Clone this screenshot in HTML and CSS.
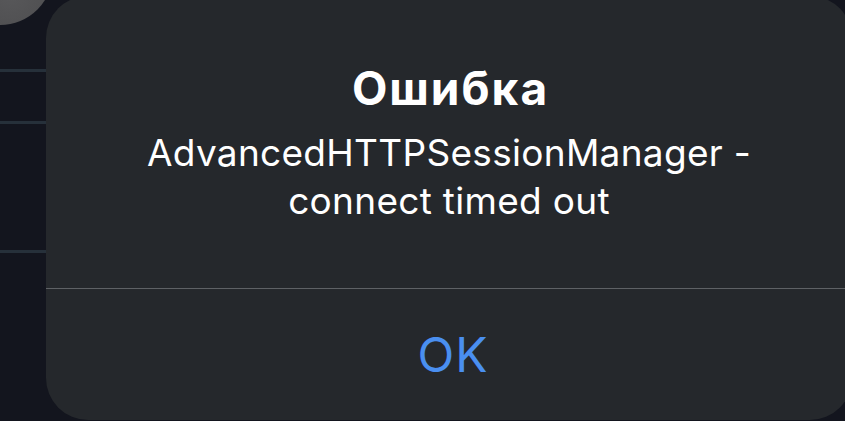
FILE: index.html
```html
<!DOCTYPE html>
<html>
<head>
    <title>Ошибка</title>
    <link rel="stylesheet" href="styles.css">
</head>
<body>
    <div class="screen">
        <!-- content behind the alert -->
        <div class="list">
            <div class="avatar"></div>
            <div class="row row-first"></div>
            <div class="row row-second"></div>
            <div class="row row-third"></div>
        </div>

        <div class="alert">
            <div class="alert-body">
                <h1 class="alert-title">Ошибка</h1>
                <p class="alert-message">AdvancedHTTPSessionManager -<br>connect timed out</p>
            </div>
            <div class="alert-actions">
                <button type="button" class="alert-button">OK</button>
            </div>
        </div>
    </div>
</body>
</html>
```

FILE: styles.css
```css
body {
    margin: 0;
    background-color: #13151e;
    font-family: Inter, "Noto Sans", sans-serif;
    overflow: hidden;
}

.screen {
    position: relative;
    width: 845px;
    height: 421px;
    overflow: hidden;
}

.list {
    width: 60px;
}

.avatar {
    position: absolute;
    left: -53px;
    top: -81px;
    width: 106px;
    height: 106px;
    border-radius: 50%;
    background: radial-gradient(circle at 60% 70%, #58585a, #434345);
}

.row {
    border-bottom: 3px solid #26303a;
}

.row-first {
    height: 69px;
}

.row-second {
    height: 49px;
}

.row-third {
    height: 126px;
}

.alert {
    position: absolute;
    left: 46px;
    top: -4px;
    width: 806px;
    height: 424px;
    background-color: #25282c;
    border-radius: 42px;
    display: flex;
    flex-direction: column;
    color: #fff;
}

.alert-body {
    height: 293px;
    box-sizing: border-box;
    padding-top: 66px;
    text-align: center;
    border-bottom: 1px solid #5e6165;
}

.alert-title {
    margin: 0 0 0 3px;
    font-size: 46px;
    font-weight: 700;
    line-height: 52px;
    letter-spacing: 2px;
}

.alert-message {
    margin: 15px 0 0;
    font-size: 37px;
    line-height: 48px;
    font-weight: 400;
    letter-spacing: 0.3px;
}

.alert-actions {
    flex: 1;
    display: flex;
    justify-content: center;
    align-items: flex-start;
    padding-top: 37px;
}

.alert-button {
    background: none;
    border: none;
    padding: 0;
    margin-left: 8px;
    color: #4a8ff0;
    font-family: Inter, "Noto Sans", sans-serif;
    font-size: 48px;
    line-height: 58px;
    font-weight: 400;
    letter-spacing: 1px;
    cursor: pointer;
}
```
